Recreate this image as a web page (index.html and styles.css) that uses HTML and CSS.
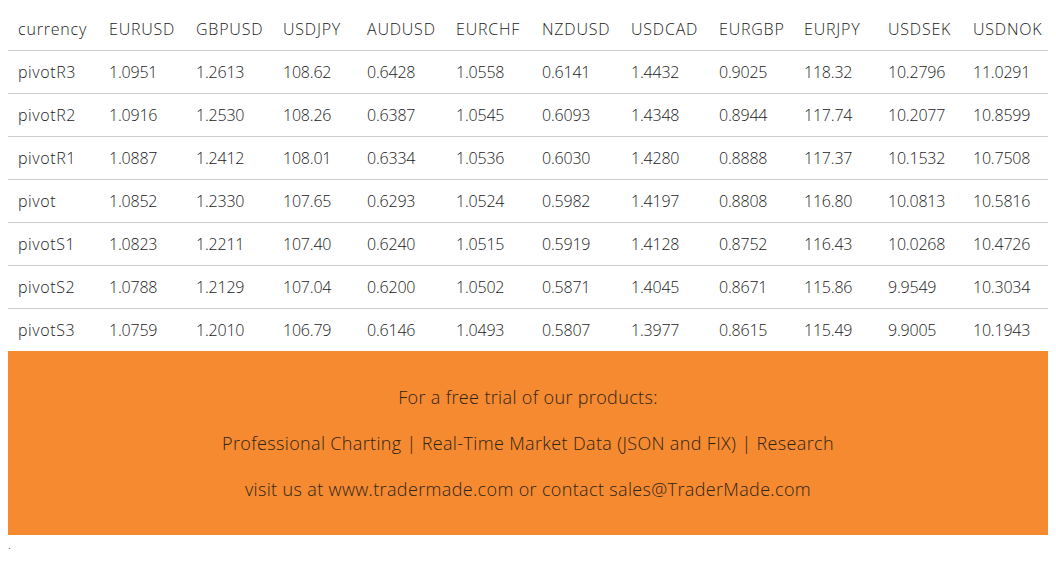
FILE: index.html
```html
<!DOCTYPE html>
<html>
<head>
<meta charset="utf-8">
<link rel="stylesheet" href="styles.css">
</head>
<body>
<table class="pivots">
  <colgroup>
    <col><col><col><col><col><col><col><col><col><col><col><col>
  </colgroup>
  <thead>
    <tr><th>currency</th><th>EURUSD</th><th>GBPUSD</th><th>USDJPY</th><th>AUDUSD</th><th>EURCHF</th><th>NZDUSD</th><th>USDCAD</th><th>EURGBP</th><th>EURJPY</th><th>USDSEK</th><th>USDNOK</th></tr>
  </thead>
  <tbody>
    <tr><td class="label">pivotR3</td><td>1.0951</td><td>1.2613</td><td>108.62</td><td>0.6428</td><td>1.0558</td><td>0.6141</td><td>1.4432</td><td>0.9025</td><td>118.32</td><td>10.2796</td><td>11.0291</td></tr>
    <tr><td class="label">pivotR2</td><td>1.0916</td><td>1.2530</td><td>108.26</td><td>0.6387</td><td>1.0545</td><td>0.6093</td><td>1.4348</td><td>0.8944</td><td>117.74</td><td>10.2077</td><td>10.8599</td></tr>
    <tr><td class="label">pivotR1</td><td>1.0887</td><td>1.2412</td><td>108.01</td><td>0.6334</td><td>1.0536</td><td>0.6030</td><td>1.4280</td><td>0.8888</td><td>117.37</td><td>10.1532</td><td>10.7508</td></tr>
    <tr><td class="label">pivot</td><td>1.0852</td><td>1.2330</td><td>107.65</td><td>0.6293</td><td>1.0524</td><td>0.5982</td><td>1.4197</td><td>0.8808</td><td>116.80</td><td>10.0813</td><td>10.5816</td></tr>
    <tr><td class="label">pivotS1</td><td>1.0823</td><td>1.2211</td><td>107.40</td><td>0.6240</td><td>1.0515</td><td>0.5919</td><td>1.4128</td><td>0.8752</td><td>116.43</td><td>10.0268</td><td>10.4726</td></tr>
    <tr><td class="label">pivotS2</td><td>1.0788</td><td>1.2129</td><td>107.04</td><td>0.6200</td><td>1.0502</td><td>0.5871</td><td>1.4045</td><td>0.8671</td><td>115.86</td><td>9.9549</td><td>10.3034</td></tr>
    <tr><td class="label">pivotS3</td><td>1.0759</td><td>1.2010</td><td>106.79</td><td>0.6146</td><td>1.0493</td><td>0.5807</td><td>1.3977</td><td>0.8615</td><td>115.49</td><td>9.9005</td><td>10.1943</td></tr>
  </tbody>
</table>
<div class="promo">
  <p>For a free trial of our products:</p>
  <p>Professional Charting | Real-Time Market Data (JSON and FIX) | Research</p>
  <p>visit us at www.tradermade.com or contact sales@TraderMade.com</p>
</div>
<div class="dot">.</div>
</body>
</html>
```
FILE: styles.css
```css
html, body {
  background: #ffffff;
}
body {
  margin: 8px;
  font-family: "Open Sans", "Lato", "Liberation Sans", sans-serif;
  font-weight: 350;
  color: #1a1a1a;
}
.pivots {
  border-collapse: collapse;
  table-layout: fixed;
  width: 1045px;
  font-size: 16px;
}
.pivots col:nth-child(1) { width: 91px; }
.pivots col:nth-child(2) { width: 87px; }
.pivots col:nth-child(3) { width: 87px; }
.pivots col:nth-child(4) { width: 84px; }
.pivots col:nth-child(5) { width: 89px; }
.pivots col:nth-child(6) { width: 86px; }
.pivots col:nth-child(7) { width: 89px; }
.pivots col:nth-child(8) { width: 88px; }
.pivots col:nth-child(9) { width: 85px; }
.pivots col:nth-child(10) { width: 84px; }
.pivots col:nth-child(11) { width: 85px; }
.pivots col:nth-child(12) { width: 90px; }
.pivots th,
.pivots td {
  text-align: left;
  font-weight: 350;
  padding: 0 0 0 10px;
  white-space: nowrap;
  line-height: 22px;
}
.pivots th {
  height: 42px;
  letter-spacing: 0.8px;
}
.pivots td {
  height: 42px;
  border-top: 1px solid #cccccc;
  letter-spacing: -0.2px;
}
.pivots td.label {
  letter-spacing: 0.6px;
}
.promo {
  background: #f58a30;
  width: 1040px;
  text-align: center;
  font-size: 18px;
  font-weight: 350;
  letter-spacing: 0.35px;
  color: #2e2418;
  padding: 14px 0 13px;
}
.promo p {
  margin: 19px 0;
  line-height: 27px;
}
.dot {
  font-size: 12px;
  line-height: 20px;
}
```
